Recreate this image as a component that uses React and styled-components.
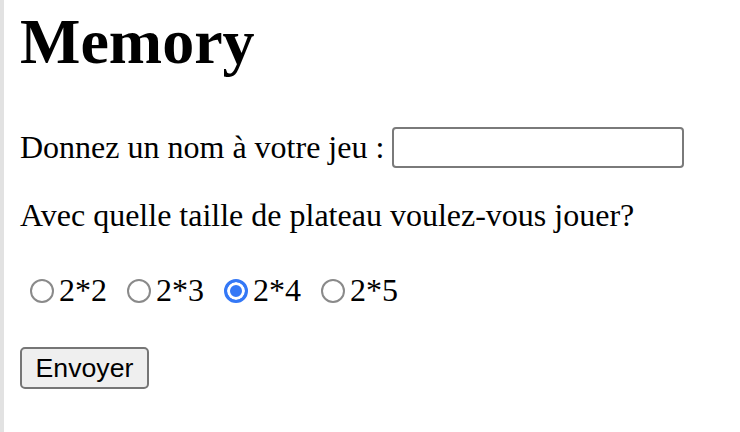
import React, { useState } from 'react';
import styled, { createGlobalStyle } from 'styled-components';

const GlobalStyle = createGlobalStyle`
  html, body {
    margin: 0;
    padding: 0;
    background: #fff;
  }
  body {
    font-family: "Liberation Serif", "Times New Roman", serif;
    color: #000;
  }
`;

const Page = styled.div`
  min-height: 100vh;
  box-sizing: border-box;
  border-left: 4px solid #e2e2e2;
  padding: 1px 0 0 16px;
`;

const Title = styled.h1`
  font-size: 64px;
  font-weight: bold;
  line-height: 74px;
  margin: 4px 0 0;
`;

const Form = styled.form`
  display: flex;
  flex-direction: column;
  align-items: flex-start;
`;

const Row = styled.div`
  display: flex;
  align-items: center;
  gap: ${x => x.gap || 0}px;
  margin-top: ${x => x.mt}px;
  font-size: 32px;
  line-height: 37px;
`;

const Question = styled.p`
  font-size: 32px;
  line-height: 37px;
  margin: ${x => x.mt}px 0 0;
`;

const TextInput = styled.input`
  box-sizing: border-box;
  width: 292px;
  height: 41px;
  border: 2px solid #7a7a7a;
  border-radius: 4px;
  padding: 2px 4px;
  font: 26.67px "Liberation Sans", Arial, sans-serif;
  outline: none;
`;

const Choice = styled.label`
  display: flex;
  align-items: center;
  margin-right: 10px;
`;

const Radio = styled.input.attrs({ type: 'radio' })`
  appearance: none;
  box-sizing: border-box;
  width: 24px;
  height: 24px;
  margin: 0 5px 0 10px;
  border: 2px solid #8a8a8a;
  border-radius: 50%;
  background: #fff;

  &:checked {
    border: 3px solid #3478f6;
    background: #3478f6;
    box-shadow: inset 0 0 0 3px #fff;
  }
`;

const Button = styled.button`
  box-sizing: border-box;
  margin-top: ${x => x.mt}px;
  height: 42px;
  width: 129px;
  padding: 0;
  background: #efefef;
  border: 2px solid #767676;
  border-radius: 5px;
  font: 26.67px "Liberation Sans", Arial, sans-serif;
  color: #000;
`;

const SIZES = ['2*2', '2*3', '2*4', '2*5'];

export default function App() {
  const [size, setSize] = useState('2*4');

  return (
    <Page>
      <GlobalStyle />
      <Title>Memory</Title>
      <Form onSubmit={e => e.preventDefault()}>
        <Row mt={48} gap={8}>
          <span>Donnez un nom à votre jeu :</span>
          <TextInput type="text" name="nom" />
        </Row>
        <Question mt={29}>Avec quelle taille de plateau voulez-vous jouer?</Question>
        <Row mt={38}>
          {SIZES.map(s => (
            <Choice key={s}>
              <Radio name="taille" checked={size === s} onChange={() => setSize(s)} />
              {s}
            </Choice>
          ))}
        </Row>
        <Button type="submit" mt={38}>Envoyer</Button>
      </Form>
    </Page>
  );
}
